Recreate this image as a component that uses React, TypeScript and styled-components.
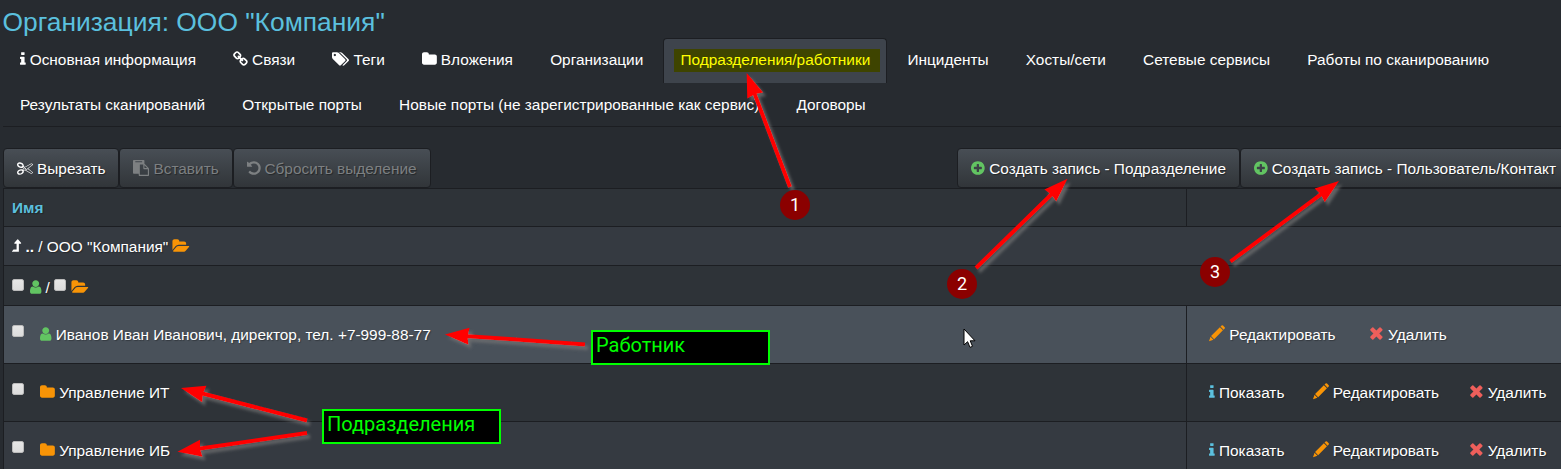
import React from "react";
import styled, { createGlobalStyle } from "styled-components";

const Global = createGlobalStyle`
  * { box-sizing: border-box; }
  html, body { margin: 0; background: #272b30; overflow: hidden; }
  body { font: 15.4px/22px "Liberation Sans", Arial, sans-serif; color: #fff; }
`;

const glyphs = {
  info: { w: 640, d: "M640 1344v128q0 26-19 45t-45 19h-512q-26 0-45-19t-19-45v-128q0-26 19-45t45-19h64v-384h-64q-26 0-45-19t-19-45v-128q0-26 19-45t45-19h384q26 0 45 19t19 45v576h64q26 0 45 19t19 45zm-128-1152v192q0 26-19 45t-45 19h-256q-26 0-45-19t-19-45v-192q0-26 19-45t45-19h256q26 0 45 19t19 45z" },
  link: { x: 64, w: 1664, d: "M1520 1216q0-40-28-68l-208-208q-28-28-68-28-42 0-72 32 3 3 19 18.5t21.5 21.5 15 19 13 25.5 3.5 27.5q0 40-28 68t-68 28q-15 0-27.5-3.5t-25.5-13-19-15-21.5-21.5-18.5-19q-33 31-33 73 0 40 28 68l206 207q27 27 68 27 40 0 68-26l147-146q28-28 28-67zm-703-705q0-40-28-68l-206-207q-28-28-68-28-39 0-68 27l-147 146q-28 28-28 67 0 40 28 68l208 208q27 27 68 27 42 0 72-31-3-3-19-18.5t-21.5-21.5-15-19-13-25.5-3.5-27.5q0-40 28-68t68-28q15 0 27.5 3.5t25.5 13 19 15 21.5 21.5 18.5 19q33-31 33-73zm895 705q0 120-85 203l-147 146q-83 83-203 83-121 0-204-85l-206-207q-83-83-83-203 0-123 88-209l-88-88q-86 88-208 88-120 0-204-84l-208-208q-84-84-84-204t85-203l147-146q83-83 203-83 121 0 204 85l206 207q83 83 83 203 0 123-88 209l88 88q86-88 208-88 120 0 204 84l208 208q84 84 84 204z" },
  tags: { w: 1920, d: "M448 448q0-53-37.5-90.5t-90.5-37.5-90.5 37.5-37.5 90.5 37.5 90.5 90.5 37.5 90.5-37.5 37.5-90.5zm1067 576q0 53-37 90l-491 492q-39 37-91 37-53 0-90-37l-715-716q-38-37-64.5-101t-26.5-117v-416q0-52 38-90t90-38h416q53 0 117 26.5t102 64.5l715 714q37 39 37 91zm384 0q0 53-37 90l-491 492q-39 37-91 37-36 0-59-14t-53-45l470-470q37-37 37-90 0-52-37-91l-715-714q-38-38-102-64.5t-117-26.5h224q53 0 117 26.5t102 64.5l715 714q37 39 37 91z" },
  folder: { x: 64, w: 1664, d: "M1728 608v704q0 92-66 158t-158 66h-1216q-92 0-158-66t-66-158v-960q0-92 66-158t158-66h320q92 0 158 66t66 158v32h672q92 0 158 66t66 158z" },
  folderOpen: { w: 1920, d: "M1815 952q0 31-31 66l-336 396q-43 51-120.5 86.5t-143.5 35.5h-1088q-34 0-60.5-13t-26.5-43q0-31 31-66l336-396q43-51 120.5-86.5t143.5-35.5h1088q34 0 60.5 13t26.5 43zm-343-344v160h-832q-94 0-197 47.5t-164 119.5l-337 396-5 6q0-4-.5-12.5t-.5-12.5v-960q0-92 66-158t158-66h320q92 0 158 66t66 158v32h544q92 0 158 66t66 158z" },
  cut: { w: 1792, d: "M960 896q26 0 45 19t19 45-19 45-45 19-45-19-19-45 19-45 45-19zm300 64l507 398q28 20 25 56-5 35-35 51l-128 64q-13 7-29 7-17 0-31-8l-690-387-110 66q-8 4-12 5 14 49 10 97-7 77-56 147.5t-132 123.5q-132 84-277 84-136 0-222-78-90-84-79-207 7-76 56-147t131-124q132-84 278-84 83 0 151 31 9-13 22-22l122-73-122-73q-13-9-22-22-68 31-151 31-146 0-278-84-82-53-131-124t-56-147q-5-59 15.5-113t63.5-93q85-79 222-79 145 0 277 84 83 52 132 123t56 148q4 48-10 97 4 1 12 5l110 66 690-387q14-8 31-8 16 0 29 7l128 64q30 16 35 51 3 36-25 56zm-681-260q46-42 21-108t-106-117q-92-59-192-59-74 0-113 36-46 42-21 108t106 117q92 59 192 59 74 0 113-36zm-85 745q81-51 106-117t-21-108q-39-36-113-36-100 0-192 59-81 51-106 117t21 108q39 36 113 36 100 0 192-59zm178-613l96 58v-11q0-36 33-56l14-8-79-44-26 26q-3 3-10 11t-12 12q-2 2-4 3.5t-3 2.5zm224 224l96 32 736-576-128-64-768 431v113l-160 96 9 8q2 2 7 6 4 4 11 12t11 12l26 26zm704 416l128-64-520-408-177 138q-2 3-13 7z" },
  paste: { w: 1792, d: "M768 1664h896v-640h-416q-40 0-68-28t-28-68v-416h-384v1152zm256-1440v-64q0-13-9.5-22.5t-22.5-9.5h-704q-13 0-22.5 9.5t-9.5 22.5v64q0 13 9.5 22.5t22.5 9.5h704q13 0 22.5-9.5t9.5-22.5zm256 672h299l-299-299v299zm512 128v672q0 40-28 68t-68 28h-960q-40 0-68-28t-28-68v-160h-544q-40 0-68-28t-28-68v-1344q0-40 28-68t68-28h1088q40 0 68 28t28 68v328q21 13 36 28l408 408q28 28 48 76t20 88z" },
  undo: { x: 128, w: 1536, d: "M1664 896q0 156-61 298t-164 245-245 164-298 61q-172 0-327-72.5t-264-204.5q-7-10-6.5-22.5t8.5-20.5l137-138q10-9 25-9 16 2 23 12 73 95 179 147t225 52q104 0 198.5-40.5t163.5-109.5 109.5-163.5 40.5-198.5-40.5-198.5-109.5-163.5-163.5-109.5-198.5-40.5q-98 0-188 35.5t-160 101.5l137 138q31 30 14 69-17 40-59 40h-448q-26 0-45-19t-19-45v-448q0-42 40-59 39-17 69 14l130 129q107-101 244.5-156.5t284.5-55.5q156 0 298 61t245 164 164 245 61 298z" },
  plus: { x: 128, w: 1536, d: "M1344 960v-128q0-26-19-45t-45-19h-256v-256q0-26-19-45t-45-19h-128q-26 0-45 19t-19 45v256h-256q-26 0-45 19t-19 45v128q0 26 19 45t45 19h256v256q0 26 19 45t45 19h128q26 0 45-19t19-45v-256h256q26 0 45-19t19-45zm320-64q0 209-103 385.5t-279.5 279.5-385.5 103-385.5-103-279.5-279.5-103-385.5 103-385.5 279.5-279.5 385.5-103 385.5 103 279.5 279.5 103 385.5z" },
  user: { x: 256, w: 1280, d: "M1536 1399q0 109-62.5 187t-150.5 78h-854q-88 0-150.5-78t-62.5-187q0-85 8.5-160.5t31.5-152 58.5-131 94-89 134.5-34.5q131 128 313 128t313-128q76 0 134.5 34.5t94 89 58.5 131 31.5 152 8.5 160.5zm-256-887q0 159-112.5 271.5t-271.5 112.5-271.5-112.5-112.5-271.5 112.5-271.5 271.5-112.5 271.5 112.5 112.5 271.5z" },
  levelUp: { x: 448, w: 1050, d: "M1467 611q-18 37-58 37h-192v864q0 14-9 23t-23 9h-704q-21 0-29-18-8-20 4-35l160-192q9-11 25-11h320v-640h-192q-40 0-58-37-17-37 9-68l320-384q18-22 49-22t49 22l320 384q27 32 9 68z" },
  pencil: { y: 90, w: 1792, d: "M0 1790L170 1290L500 1620ZM230 1215L1215 230L1560 575L575 1560ZM1290 155L1410 35Q1490-45 1570 35L1755 220Q1835 300 1755 380L1635 500Z" },
  times: { x: 180, y: -60, w: 1580, d: "M896 456L1235 117Q1300 52 1365 117L1565 317Q1630 382 1565 447L1226 786L1565 1125Q1630 1190 1565 1255L1365 1455Q1300 1520 1235 1455L896 1116L557 1455Q492 1520 427 1455L227 1255Q162 1190 227 1125L566 786L227 447Q162 382 227 317L427 117Q492 52 557 117Z" },
} as const;

type GlyphName = keyof typeof glyphs;

const Svg = styled.svg<{ $color?: string }>`
  display: inline-block;
  height: 16px;
  vertical-align: -2px;
  margin-right: 4px;
  overflow: visible;
  fill: ${(p) => p.$color ?? "currentColor"};
`;

function Icon({ name, color }: { name: GlyphName; color?: string }) {
  const g = glyphs[name] as { x?: number; y?: number; w: number; d: string };
  return (
    <Svg $color={color} width={(g.w / 1792) * 16} viewBox={`${g.x ?? 0} ${g.y ?? 0} ${g.w} 1792`}>
      <path d={g.d} />
    </Svg>
  );
}

const Page = styled.div`
  position: relative;
  width: 1561px;
  height: 469px;
  overflow: hidden;
  padding-left: 3px;
`;
const Title = styled.h1`
  margin: 0 0 0 -0.5px;
  height: 38px;
  padding-top: 7px;
  font-size: 26.4px;
  line-height: 30px;
  font-weight: 400;
  color: #5bc0de;
`;
const Tabs = styled.nav`
  display: flex;
  flex-wrap: wrap;
  column-gap: 3.2px;
  height: 89px;
  align-content: flex-start;
  border-bottom: 1px solid #1c1e22;
`;
const Tab = styled.a<{ $active?: boolean }>`
  height: 45px;
  padding: 10px 16px;
  white-space: nowrap;
  border: 1px solid ${(p) => (p.$active ? "#1c1e22" : "transparent")};
  border-bottom: 0;
  border-radius: 4px 4px 0 0;
  background: ${(p) => (p.$active ? "#3e444c" : "transparent")};
`;
const Marked = styled.span`
  display: block;
  margin: 0 -10px 0 -6px;
  padding: 0 10px 0 6px;
  height: 23px;
  background: #3e4400;
  color: #ff0;
`;
const Toolbar = styled.div`
  display: flex;
  justify-content: space-between;
  width: 1567px;
  margin-top: 21px;
`;
const Group = styled.div`
  display: flex;
`;
const Button = styled.button<{ $muted?: boolean }>`
  height: 40px;
  padding: 2px 13px 0;
  white-space: nowrap;
  font: inherit;
  color: ${(p) => (p.$muted ? "#7d8082" : "#fff")};
  border: 1px solid #1c1e22;
  border-radius: 4px;
  background: linear-gradient(#484e55, #3a3f44 60%, #313539);
  text-shadow: 1px 1px 1px rgba(0, 0, 0, 0.4);
`;
const Table = styled.div`
  width: 1600px;
  border-left: 1px solid #1c1e22;
`;
const Row = styled.div<{ $h: number; $bg: string; $split?: boolean }>`
  display: grid;
  grid-template-columns: ${(p) => (p.$split ? "1182px 1fr" : "1fr")};
  height: ${(p) => p.$h}px;
  background: ${(p) => p.$bg};
  border-top: 1px solid #1c1e22;
  text-shadow: 1px 1px 1px rgba(0, 0, 0, 0.3);
`;
const Cell = styled.div<{ $top: number }>`
  padding: ${(p) => p.$top}px 8px 0;
  white-space: nowrap;
  & + & {
    border-left: 1px solid #1c1e22;
    padding-left: 22.3px;
  }
`;
const Head = styled.b`
  color: #5bc0de;
`;
const Check = styled.span<{ $gap?: number }>`
  display: inline-block;
  width: 12px;
  height: 12px;
  margin-right: ${(p) => p.$gap ?? 6}px;
  vertical-align: 2px;
  border: 1px solid #bbb;
  border-radius: 2px;
  background: linear-gradient(#e6e6e6, #dcdcdc);
`;
const Entry = styled.div`
  display: flex;
  align-items: flex-start;
`;
const EntryCheck = styled(Check)`
  margin: 1px 16.3px 0 0;
`;
const Actions = styled.div`
  display: flex;
`;
const Action = styled.a<{ $gap: number }>`
  margin-right: ${(p) => p.$gap}px;
`;
const Overlay = styled.svg`
  position: absolute;
  inset: 0;
`;
const Pin = styled.span<{ $x: number; $y: number }>`
  position: absolute;
  left: ${(p) => p.$x}px;
  top: ${(p) => p.$y}px;
  width: 30px;
  height: 30px;
  border-radius: 50%;
  background: #8b0000;
  text-align: center;
  font: 18px/30px Roboto, sans-serif;
`;
const Note = styled.div<{ $x: number; $y: number }>`
  position: absolute;
  left: ${(p) => p.$x}px;
  top: ${(p) => p.$y}px;
  width: 179px;
  height: 35px;
  padding-left: 3px;
  border: 2px solid #0f0;
  background: #000;
  color: #0f0;
  font: 20px/27px Roboto, sans-serif;
`;

function Arrow({ from, to }: { from: [number, number]; to: [number, number] }) {
  const dx = to[0] - from[0];
  const dy = to[1] - from[1];
  const len = Math.hypot(dx, dy);
  const angle = (Math.atan2(dy, dx) * 180) / Math.PI;
  return (
    <g filter="url(#shade)">
      <path
        transform={`translate(${from[0]} ${from[1]}) rotate(${angle})`}
        fill="#f00"
        d={`M0-2H${len - 23}L${len - 24}-8.5L${len} 0L${len - 24} 8.5L${len - 23} 2H0Z`}
      />
    </g>
  );
}

const Edit = ({ gap }: { gap: number }) => (
  <Action $gap={gap}><Icon name="pencil" color="#f89406" />Редактировать</Action>
);
const Remove = () => (
  <Action $gap={0}><Icon name="times" color="#ee5f5b" />Удалить</Action>
);
const Unit = ({ name, bg }: { name: string; bg: string }) => (
  <Row $h={58} $bg={bg} $split>
    <Cell $top={18}>
      <Entry><EntryCheck /><span><Icon name="folder" color="#f89406" />{name}</span></Entry>
    </Cell>
    <Cell $top={18}>
      <Actions>
        <Action $gap={28.4}><Icon name="info" color="#5bc0de" />Показать</Action>
        <Edit gap={30.4} />
        <Remove />
      </Actions>
    </Cell>
  </Row>
);

export default function App() {
  return (
    <Page>
      <Global />
      <Title>Организация: ООО "Компания"</Title>
      <Tabs>
        <Tab><Icon name="info" />Основная информация</Tab>
        <Tab><Icon name="link" />Связи</Tab>
        <Tab><Icon name="tags" />Теги</Tab>
        <Tab><Icon name="folder" />Вложения</Tab>
        <Tab>Организации</Tab>
        <Tab $active><Marked>Подразделения/работники</Marked></Tab>
        <Tab>Инциденты</Tab>
        <Tab>Хосты/сети</Tab>
        <Tab>Сетевые сервисы</Tab>
        <Tab>Работы по сканированию</Tab>
        <Tab>Результаты сканирований</Tab>
        <Tab>Открытые порты</Tab>
        <Tab>Новые порты (не зарегистрированные как сервис)</Tab>
        <Tab>Договоры</Tab>
      </Tabs>
      <Toolbar>
        <Group>
          <Button><Icon name="cut" />Вырезать</Button>
          <Button $muted><Icon name="paste" />Вставить</Button>
          <Button $muted><Icon name="undo" />Сбросить выделение</Button>
        </Group>
        <Group>
          <Button><Icon name="plus" color="#62c462" />Создать запись - Подразделение</Button>
          <Button><Icon name="plus" color="#62c462" />Создать запись - Пользователь/Контакт</Button>
        </Group>
      </Toolbar>
      <Table>
        <Row $h={38} $bg="#2e3338" $split><Cell $top={8}><Head>Имя</Head></Cell><Cell $top={8} /></Row>
        <Row $h={39} $bg="#353a41"><Cell $top={9}><Icon name="levelUp" /><b>..</b> / ООО "Компания" <Icon name="folderOpen" color="#f89406" /></Cell></Row>
        <Row $h={40} $bg="#2e3338"><Cell $top={11}><Check /><Icon name="user" color="#62c462" />/ <Check $gap={6.5} /><Icon name="folderOpen" color="#f89406" /></Cell></Row>
        <Row $h={58} $bg="#49515a" $split>
          <Cell $top={18}>
            <Entry><EntryCheck /><span><Icon name="user" color="#62c462" />Иванов Иван Иванович, директор, тел. +7-999-88-77</span></Entry>
          </Cell>
          <Cell $top={18}><Actions><Edit gap={34.4} /><Remove /></Actions></Cell>
        </Row>
        <Unit name="Управление ИТ" bg="#2e3338" />
        <Unit name="Управление ИБ" bg="#353a41" />
      </Table>
      <Overlay width="1561" height="469">
        <defs>
          <filter id="shade" filterUnits="userSpaceOnUse" x="0" y="0" width="1561" height="469">
            <feDropShadow dx="3" dy="3.5" stdDeviation="1.5" floodColor="#777" floodOpacity="0.7" />
          </filter>
        </defs>
        <Arrow from={[790, 187]} to={[746.7, 73]} />
        <Arrow from={[976, 268]} to={[1067.5, 178.7]} />
        <Arrow from={[1230.5, 261.5]} to={[1339, 181]} />
        <Arrow from={[585, 344.5]} to={[445, 334.5]} />
        <Arrow from={[307, 420.5]} to={[181, 388]} />
        <Arrow from={[307, 433]} to={[177.5, 451.7]} />
        <path d="M964 329V345L967.6 341.7L970 347.4L972.5 346.3L970.2 340.8H975Z" fill="#fff" stroke="#000" />
      </Overlay>
      <Pin $x={780} $y={190}>1</Pin>
      <Pin $x={947} $y={269}>2</Pin>
      <Pin $x={1200} $y={257}>3</Pin>
      <Note $x={591} $y={330}>Работник</Note>
      <Note $x={322} $y={409}>Подразделения</Note>
    </Page>
  );
}
